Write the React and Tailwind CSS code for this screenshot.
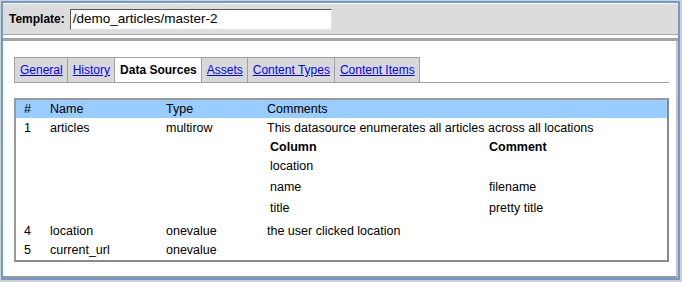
import React from "react";

const ROWS_BEFORE = [{ id: "1", name: "articles", type: "multirow", comment: "This datasource enumerates all articles across all locations" }];

const COLUMNS = [
  { column: "location", comment: "" },
  { column: "name", comment: "filename" },
  { column: "title", comment: "pretty title" },
];

const ROWS_AFTER = [
  { id: "4", name: "location", type: "onevalue", comment: "the user clicked location", h: "h-[20px] mt-[2px]" },
  { id: "5", name: "current_url", type: "onevalue", comment: "", h: "h-[19px]" },
];

const TABS = ["General", "History", "Data Sources", "Assets", "Content Types", "Content Items"];

const Row = ({ row, className }) => (
  <div className={`flex items-center ${className}`}>
    <div className="w-[26px] pl-2">{row.id}</div>
    <div className="w-[116px] pl-2">{row.name}</div>
    <div className="w-[101px] pl-2">{row.type}</div>
    <div className="flex-1 pl-2 whitespace-nowrap">{row.comment}</div>
  </div>
);

export default function App() {
  return (
    <div
      className="w-[682px] h-[282px] bg-[#d0d0d0] pl-px pt-px pr-[2px] pb-[2px] text-[12px] text-black"
      style={{ fontFamily: '"Liberation Sans", Arial, sans-serif' }}
    >
      <div className="h-full border-2 border-[#6b9bd4] flex flex-col">
        {/* Template header */}
        <div className="h-[31px] bg-[#dcdcdc] border-t border-white flex items-center pl-[6px]">
          <span className="font-bold mr-[5px]">Template:</span>
          <div className="w-[262px] h-[21px] bg-white border border-t-[#555] border-l-[#555] border-r-[#e4e4e4] border-b-[#e4e4e4] flex items-center pl-[2px] text-[13.5px]">
            /demo_articles/master-2
          </div>
        </div>
        <div className="h-px bg-[#a8a8a8]" />
        <div className="h-[3px] bg-white" />
        <div className="h-[3px] bg-[#a4a4a4]" />

        {/* Content panel */}
        <div className="flex-1 bg-white border-r-2 border-r-[#c4c4c4] border-b-2 border-b-[#999] pl-[11px] pr-[7px] pt-[16px]">
          {/* Tabs */}
          <div className="flex border-b border-[#a0a0a0] h-[26px]">
            {TABS.map((t) => {
              const active = t === "Data Sources";
              return (
                <div
                  key={t}
                  className={`h-[25px] flex items-center pl-[5px] pr-[4px] border-t border-r border-[#a0a0a0] first:border-l ${
                    active ? "bg-white font-bold" : "bg-[#d8d8d8]"
                  }`}
                >
                  {active ? t : <a href="#" className="text-[#0000ff] underline">{t}</a>}
                </div>
              );
            })}
          </div>

          {/* Data sources table */}
          <div className="mt-[15px] text-[12.5px] border-2 border-t-[#9a9a9a] border-l-[#9a9a9a] border-r-[#8a8a8a] border-b-[#8a8a8a]">
            <div className="flex items-center h-[18px] bg-[#99ccff]">
              <div className="w-[26px] pl-2">#</div>
              <div className="w-[116px] pl-2">Name</div>
              <div className="w-[101px] pl-2">Type</div>
              <div className="flex-1 pl-2">Comments</div>
            </div>
            {ROWS_BEFORE.map((r) => (
              <Row key={r.id} row={r} className="h-[20px]" />
            ))}
            <div className="flex">
              <div className="w-[251px]" />
              <div className="flex-1 pl-[3px]">
                <div className="flex items-center h-[18px] font-bold">
                  <div className="w-[219px]">Column</div>
                  <div>Comment</div>
                </div>
                {COLUMNS.map((c) => (
                  <div key={c.column} className="flex items-center h-[21px]">
                    <div className="w-[219px]">{c.column}</div>
                    <div>{c.comment}</div>
                  </div>
                ))}
              </div>
            </div>
            {ROWS_AFTER.map((r) => (
              <Row key={r.id} row={r} className={r.h} />
            ))}
          </div>
        </div>
      </div>
    </div>
  );
}
